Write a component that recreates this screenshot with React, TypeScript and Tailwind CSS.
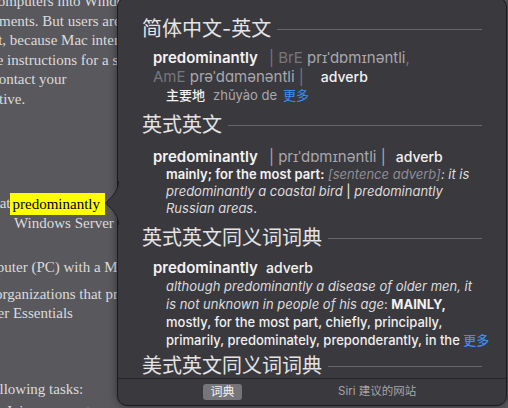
import React from "react";

// Page text sitting behind the lookup popover, cut at the left edge.
function PageText() {
  return (
    <div className="font-['Liberation_Serif',serif] text-[15px] text-[#dcdcdc] whitespace-nowrap">
      <div className="mt-[-8px] leading-[19.5px]">
        <div className="ml-[-9px]">computers into Windows</div>
        <div className="ml-[-1px]">ments. But users are</div>
        <div className="ml-[-6px]">it, because Mac interfaces</div>
        <div className="ml-[-15px]">the instructions for a single</div>
        <div className="ml-[-8px]">contact your</div>
        <div className="ml-[-1px]">tive.</div>
      </div>
      <div className="mt-[85px] leading-[19.5px]">
        <div className="ml-[-12px] flex items-center h-[19.5px]">
          <span>that</span>
          <span className="ml-[-1px] inline-block h-[22px] leading-[22px] bg-[#ffff00] pl-[3px] pr-[5px] text-black">
            predominantly
          </span>
        </div>
        <div className="pl-[14px]">Windows Server</div>
      </div>
      <div className="mt-[25px] leading-[19.5px]">
        <div className="ml-[-29px]">computer (PC) with a Mac</div>
      </div>
      <div className="mt-[7px] leading-[19px]">
        <div className="ml-[-5px]">organizations that provide</div>
        <div className="ml-[-30px]">Server Essentials</div>
      </div>
      <div className="mt-[57px] leading-[19.5px]">
        <div className="ml-[-13px]">following tasks:</div>
        <div className="ml-[6px] mt-[3px]">Join a computer</div>
      </div>
    </div>
  );
}

function Heading({ children }: { children: React.ReactNode }) {
  return (
    <div className="flex h-[22px] items-center gap-[6px]">
      <span className="whitespace-nowrap text-[20px] leading-[22px] text-[#e4e4e6]">{children}</span>
      <div className="h-px flex-1 bg-[#67666b]" />
    </div>
  );
}

const dim = "text-[#78777c]";
const soft = "text-[#a9a8ad]";

export default function App() {
  return (
    <div className="relative h-[408px] w-[508px] overflow-hidden bg-[#59585d]">
      <PageText />

      {/* Dictionary lookup popover */}
      <div className="absolute left-[117px] top-[-3px] h-[409px] w-[390px] rounded-[10px] border border-[#1c1c1e] bg-[#3a393e] shadow-[0_0_8px_rgba(0,0,0,0.45)] font-['Inter','Noto_Sans_CJK_SC',sans-serif]">
        <svg
          className="absolute left-[-14px] top-[183px]"
          width="17"
          height="44"
          viewBox="0 0 17 44"
        >
          <path d="M14.5 0 C14.5 9 10 14 1.5 22 C10 30 14.5 35 14.5 44 L17 44 L17 0 Z" fill="#3a393e" />
          <path d="M14.5 0 C14.5 9 10 14 1.5 22 C10 30 14.5 35 14.5 44" fill="none" stroke="#1c1c1e" strokeWidth="1" />
        </svg>

        <div className="flex h-full flex-col overflow-hidden rounded-[9px]">
          <div className="h-[380px] shrink-0 overflow-hidden px-[24px] pt-[20px]">
            <Heading>简体中文-英文</Heading>
            <div className="mt-[8px] whitespace-nowrap pl-[11px] leading-[19px]">
              <div className="text-[15px]">
                <span className="font-semibold text-[#f2f2f2]">predominantly</span>
                <span className={`ml-[11px] ${dim}`}>| BrE </span>
                <span className={soft}>prɪˈdɒmɪnəntli</span>
                <span className={dim}>,</span>
              </div>
              <div className="text-[15px]">
                <span className={dim}>AmE </span>
                <span className={soft}>prəˈdɑmənəntli</span>
                <span className={dim}> |</span>
                <span className="ml-[17px] text-[14px] font-medium text-[#f2f2f2]">adverb</span>
              </div>
              <div className="pl-[13px] text-[13px]">
                <span className="font-medium text-[#f2f2f2]">主要地</span>
                <span className={`ml-[8px] ${soft}`}>zhǔyào de</span>
                <span className="ml-[6px] text-[#3a8ef2]">更多</span>
              </div>
            </div>

            <div className="mt-[9px]">
              <Heading>英式英文</Heading>
            </div>
            <div className="mt-[11px] whitespace-nowrap pl-[11px]">
              <div className="text-[15px] leading-[19px]">
                <span className="font-semibold text-[#f2f2f2]">predominantly</span>
                <span className={`ml-[11px] ${soft}`}>| prɪˈdɒmɪnəntli |</span>
                <span className="ml-[10px] text-[14px] font-medium text-[#f2f2f2]">adverb</span>
              </div>
              <div className="pl-[13px] text-[13px] leading-[17px] text-[#dcdcde]">
                <div>
                  <span className="font-semibold text-[#f2f2f2]">mainly; for the most part:</span>{" "}
                  <i className="text-[#8f8e93]">[sentence adverb]</i>
                  <i>: it is</i>
                </div>
                <div>
                  <i>predominantly a coastal bird</i> <span className="text-[#f2f2f2]">|</span>{" "}
                  <i>predominantly</i>
                </div>
                <div>
                  <i>Russian areas</i>.
                </div>
              </div>
            </div>

            <div className="mt-[10px]">
              <Heading>英式英文同义词词典</Heading>
            </div>
            <div className="mt-[9px] whitespace-nowrap pl-[11px]">
              <div className="text-[15px] leading-[19px]">
                <span className="font-semibold text-[#f2f2f2]">predominantly</span>
                <span className="ml-[8px] text-[14px] font-medium text-[#f2f2f2]">adverb</span>
              </div>
              <div className="pl-[13px] text-[13px] leading-[18px] text-[#dcdcde]">
                <div>
                  <i>although predominantly a disease of older men, it</i>
                </div>
                <div>
                  <i>is not unknown in people of his age</i>:{" "}
                  <span className="font-bold text-[#f2f2f2]">MAINLY,</span>
                </div>
                <div className="font-medium text-[#f0f0f0]">mostly, for the most part, chiefly, principally,</div>
                <div className="font-medium text-[#f0f0f0]">
                  primarily, predominately, preponderantly, in the{" "}
                  <span className="text-[#3a8ef2]">更多</span>
                </div>
              </div>
            </div>

            <div className="mt-[6px]">
              <Heading>美式英文同义词词典</Heading>
            </div>
          </div>

          <div className="flex flex-1 items-center gap-[96px] border-t border-[#242327] pl-[85px] text-[12px]">
            <span className="flex h-[16px] w-[39px] items-center justify-center rounded-[3px] bg-[#767579] text-[#f4f4f4]">
              词典
            </span>
            <span className="text-[11.5px] text-[#a6a5aa]">Siri 建议的网站</span>
          </div>
        </div>
      </div>
    </div>
  );
}
